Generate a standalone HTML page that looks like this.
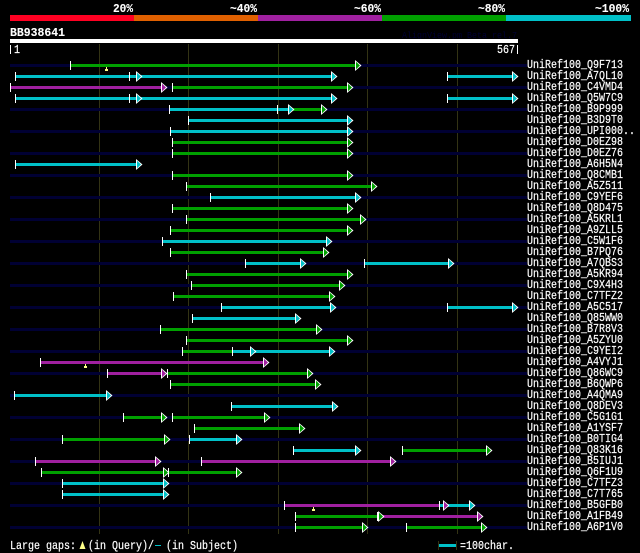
<!DOCTYPE html>
<html><head><meta charset="utf-8"><style>
html,body{margin:0;padding:0;background:#000;width:640px;height:553px;overflow:hidden}
svg{display:block}
text{font-family:"Liberation Mono",monospace;fill:#fff;font-size:12px;stroke:#fff;stroke-width:.2px}
.g{fill:#00a000}.c{fill:#00c0c8}.p{fill:#a020a0}
rect.g,rect.c,rect.p,rect.n{height:3px}
.n{fill:#000033}
.t{fill:#fff;width:1px;height:9px}
.b{font-weight:bold;stroke-width:.1px}
</style></head><body>
<svg width="640" height="553" viewBox="0 0 640 553" xmlns="http://www.w3.org/2000/svg">
<defs><g id="a"><polygon fill="#fff" points="0,-5.5 6.5,0 0,5.5"/><polygon points="1,-3.8 5,0 1,3.8"/></g></defs>
<rect x="10" y="15" width="124" height="6" fill="#ff0022"/>
<rect x="134" y="15" width="124" height="6" fill="#e06000"/>
<rect x="258" y="15" width="124" height="6" fill="#a020a0"/>
<rect x="382" y="15" width="124" height="6" fill="#00a000"/>
<rect x="506" y="15" width="125" height="6" fill="#00c0c8"/>
<text class="b" x="113" y="12" textLength="20" lengthAdjust="spacingAndGlyphs">20%</text>
<text class="b" x="230" y="12" textLength="27" lengthAdjust="spacingAndGlyphs">~40%</text>
<text class="b" x="354" y="12" textLength="27" lengthAdjust="spacingAndGlyphs">~60%</text>
<text class="b" x="478" y="12" textLength="27" lengthAdjust="spacingAndGlyphs">~80%</text>
<text class="b" x="595" y="12" textLength="34" lengthAdjust="spacingAndGlyphs">~100%</text>
<text class="b" x="10" y="36" textLength="55" lengthAdjust="spacingAndGlyphs">BB938641</text>
<text x="402" y="38" style="fill:#000033;stroke:none;font-size:9px" textLength="115" lengthAdjust="spacingAndGlyphs">AlignView.pm Beta rel.7</text>
<rect x="10" y="39" width="508" height="4" fill="#fff"/>
<rect x="10" y="45" width="1" height="9" fill="#fff"/>
<text x="14" y="53" textLength="6" lengthAdjust="spacingAndGlyphs">1</text>
<text x="497" y="53" textLength="18" lengthAdjust="spacingAndGlyphs">567</text>
<rect x="517" y="45" width="1" height="9" fill="#fff"/>
<g fill="#333314"><rect x="99" y="44" width="1" height="490"/><rect x="188" y="44" width="1" height="490"/><rect x="278" y="44" width="1" height="490"/><rect x="367" y="44" width="1" height="490"/><rect x="457" y="44" width="1" height="490"/></g>

<g transform="translate(0,64)"><rect class="n" x="10" width="517"/><rect class="g" x="70" width="286"/><rect class="t" x="70" y="-3"/><use href="#a" class="g" x="355" y="1.5"/><text x="527" y="4" textLength="96" lengthAdjust="spacingAndGlyphs">UniRef100_Q9F713</text></g>
<rect x="105" y="69" width="3" height="2" fill="#ffff88"/><rect x="106" y="67" width="1" height="2" fill="#ffff88"/>
<g transform="translate(0,75)"><rect class="c" x="15" width="317"/><rect class="t" x="15" y="-3"/><rect class="t" x="129" y="-3"/><use href="#a" class="c" x="136" y="1.5"/><use href="#a" class="c" x="331" y="1.5"/><rect class="c" x="447" width="66"/><rect class="t" x="447" y="-3"/><use href="#a" class="c" x="512" y="1.5"/><text x="527" y="4" textLength="96" lengthAdjust="spacingAndGlyphs">UniRef100_A7QL10</text></g>
<g transform="translate(0,86)"><rect class="n" x="10" width="517"/><rect class="p" x="10" width="152"/><rect class="t" x="10" y="-3"/><use href="#a" class="p" x="161" y="1.5"/><rect class="g" x="172" width="176"/><rect class="t" x="172" y="-3"/><use href="#a" class="g" x="347" y="1.5"/><text x="527" y="4" textLength="96" lengthAdjust="spacingAndGlyphs">UniRef100_C4VMD4</text></g>
<g transform="translate(0,97)"><rect class="c" x="15" width="317"/><rect class="t" x="15" y="-3"/><rect class="t" x="129" y="-3"/><use href="#a" class="c" x="136" y="1.5"/><use href="#a" class="c" x="331" y="1.5"/><rect class="c" x="447" width="66"/><rect class="t" x="447" y="-3"/><use href="#a" class="c" x="512" y="1.5"/><text x="527" y="4" textLength="96" lengthAdjust="spacingAndGlyphs">UniRef100_Q5W7C9</text></g>
<g transform="translate(0,108)"><rect class="n" x="10" width="517"/><rect class="c" x="169" width="120"/><rect class="g" x="289" width="33"/><rect class="t" x="169" y="-3"/><rect class="t" x="277" y="-3"/><use href="#a" class="c" x="288" y="1.5"/><use href="#a" class="g" x="321" y="1.5"/><text x="527" y="4" textLength="96" lengthAdjust="spacingAndGlyphs">UniRef100_B9P999</text></g>
<g transform="translate(0,119)"><rect class="c" x="188" width="160"/><rect class="t" x="188" y="-3"/><use href="#a" class="c" x="347" y="1.5"/><text x="527" y="4" textLength="96" lengthAdjust="spacingAndGlyphs">UniRef100_B3D9T0</text></g>
<g transform="translate(0,130)"><rect class="n" x="10" width="517"/><rect class="c" x="170" width="178"/><rect class="t" x="170" y="-3"/><use href="#a" class="c" x="347" y="1.5"/><text x="527" y="4" textLength="108" lengthAdjust="spacingAndGlyphs">UniRef100_UPI000..</text></g>
<g transform="translate(0,141)"><rect class="g" x="172" width="176"/><rect class="t" x="172" y="-3"/><use href="#a" class="g" x="347" y="1.5"/><text x="527" y="4" textLength="96" lengthAdjust="spacingAndGlyphs">UniRef100_D0EZ98</text></g>
<g transform="translate(0,152)"><rect class="n" x="10" width="517"/><rect class="g" x="172" width="176"/><rect class="t" x="172" y="-3"/><use href="#a" class="g" x="347" y="1.5"/><text x="527" y="4" textLength="96" lengthAdjust="spacingAndGlyphs">UniRef100_D0EZ76</text></g>
<g transform="translate(0,163)"><rect class="c" x="15" width="122"/><rect class="t" x="15" y="-3"/><use href="#a" class="c" x="136" y="1.5"/><text x="527" y="4" textLength="96" lengthAdjust="spacingAndGlyphs">UniRef100_A6H5N4</text></g>
<g transform="translate(0,174)"><rect class="n" x="10" width="517"/><rect class="g" x="172" width="176"/><rect class="t" x="172" y="-3"/><use href="#a" class="g" x="347" y="1.5"/><text x="527" y="4" textLength="96" lengthAdjust="spacingAndGlyphs">UniRef100_Q8CMB1</text></g>
<g transform="translate(0,185)"><rect class="g" x="186" width="186"/><rect class="t" x="186" y="-3"/><use href="#a" class="g" x="371" y="1.5"/><text x="527" y="4" textLength="96" lengthAdjust="spacingAndGlyphs">UniRef100_A5Z511</text></g>
<g transform="translate(0,196)"><rect class="n" x="10" width="517"/><rect class="c" x="210" width="146"/><rect class="t" x="210" y="-3"/><use href="#a" class="c" x="355" y="1.5"/><text x="527" y="4" textLength="96" lengthAdjust="spacingAndGlyphs">UniRef100_C9YEF6</text></g>
<g transform="translate(0,207)"><rect class="g" x="172" width="176"/><rect class="t" x="172" y="-3"/><use href="#a" class="g" x="347" y="1.5"/><text x="527" y="4" textLength="96" lengthAdjust="spacingAndGlyphs">UniRef100_Q8D475</text></g>
<g transform="translate(0,218)"><rect class="n" x="10" width="517"/><rect class="g" x="186" width="175"/><rect class="t" x="186" y="-3"/><use href="#a" class="g" x="360" y="1.5"/><text x="527" y="4" textLength="96" lengthAdjust="spacingAndGlyphs">UniRef100_A5KRL1</text></g>
<g transform="translate(0,229)"><rect class="g" x="170" width="178"/><rect class="t" x="170" y="-3"/><use href="#a" class="g" x="347" y="1.5"/><text x="527" y="4" textLength="96" lengthAdjust="spacingAndGlyphs">UniRef100_A9ZLL5</text></g>
<g transform="translate(0,240)"><rect class="n" x="10" width="517"/><rect class="c" x="162" width="165"/><rect class="t" x="162" y="-3"/><use href="#a" class="c" x="326" y="1.5"/><text x="527" y="4" textLength="96" lengthAdjust="spacingAndGlyphs">UniRef100_C5W1F6</text></g>
<g transform="translate(0,251)"><rect class="g" x="170" width="154"/><rect class="t" x="170" y="-3"/><use href="#a" class="g" x="323" y="1.5"/><text x="527" y="4" textLength="96" lengthAdjust="spacingAndGlyphs">UniRef100_B7PQ76</text></g>
<g transform="translate(0,262)"><rect class="n" x="10" width="517"/><rect class="c" x="245" width="56"/><rect class="t" x="245" y="-3"/><use href="#a" class="c" x="300" y="1.5"/><rect class="c" x="364" width="85"/><rect class="t" x="364" y="-3"/><use href="#a" class="c" x="448" y="1.5"/><text x="527" y="4" textLength="96" lengthAdjust="spacingAndGlyphs">UniRef100_A7QBS3</text></g>
<g transform="translate(0,273)"><rect class="g" x="186" width="162"/><rect class="t" x="186" y="-3"/><use href="#a" class="g" x="347" y="1.5"/><text x="527" y="4" textLength="96" lengthAdjust="spacingAndGlyphs">UniRef100_A5KR94</text></g>
<g transform="translate(0,284)"><rect class="n" x="10" width="517"/><rect class="g" x="191" width="149"/><rect class="t" x="191" y="-3"/><use href="#a" class="g" x="339" y="1.5"/><text x="527" y="4" textLength="96" lengthAdjust="spacingAndGlyphs">UniRef100_C9X4H3</text></g>
<g transform="translate(0,295)"><rect class="g" x="173" width="157"/><rect class="t" x="173" y="-3"/><use href="#a" class="g" x="329" y="1.5"/><text x="527" y="4" textLength="96" lengthAdjust="spacingAndGlyphs">UniRef100_C7TFZ2</text></g>
<g transform="translate(0,306)"><rect class="n" x="10" width="517"/><rect class="c" x="221" width="110"/><rect class="t" x="221" y="-3"/><use href="#a" class="c" x="330" y="1.5"/><rect class="c" x="447" width="66"/><rect class="t" x="447" y="-3"/><use href="#a" class="c" x="512" y="1.5"/><text x="527" y="4" textLength="96" lengthAdjust="spacingAndGlyphs">UniRef100_A5C517</text></g>
<g transform="translate(0,317)"><rect class="c" x="192" width="104"/><rect class="t" x="192" y="-3"/><use href="#a" class="c" x="295" y="1.5"/><text x="527" y="4" textLength="96" lengthAdjust="spacingAndGlyphs">UniRef100_Q85WW0</text></g>
<g transform="translate(0,328)"><rect class="n" x="10" width="517"/><rect class="g" x="160" width="157"/><rect class="t" x="160" y="-3"/><use href="#a" class="g" x="316" y="1.5"/><text x="527" y="4" textLength="96" lengthAdjust="spacingAndGlyphs">UniRef100_B7R8V3</text></g>
<g transform="translate(0,339)"><rect class="g" x="186" width="162"/><rect class="t" x="186" y="-3"/><use href="#a" class="g" x="347" y="1.5"/><text x="527" y="4" textLength="96" lengthAdjust="spacingAndGlyphs">UniRef100_A5ZYU0</text></g>
<g transform="translate(0,350)"><rect class="n" x="10" width="517"/><rect class="g" x="182" width="50"/><rect class="c" x="232" width="98"/><rect class="t" x="182" y="-3"/><rect class="t" x="232" y="-3"/><use href="#a" class="c" x="250" y="1.5"/><use href="#a" class="c" x="329" y="1.5"/><text x="527" y="4" textLength="96" lengthAdjust="spacingAndGlyphs">UniRef100_C9YEI2</text></g>
<g transform="translate(0,361)"><rect class="p" x="40" width="224"/><rect class="t" x="40" y="-3"/><use href="#a" class="p" x="263" y="1.5"/><text x="527" y="4" textLength="96" lengthAdjust="spacingAndGlyphs">UniRef100_A4VYJ1</text></g>
<rect x="84" y="366" width="3" height="2" fill="#ffff88"/><rect x="85" y="364" width="1" height="2" fill="#ffff88"/>
<g transform="translate(0,372)"><rect class="n" x="10" width="517"/><rect class="p" x="107" width="55"/><rect class="t" x="107" y="-3"/><use href="#a" class="p" x="161" y="1.5"/><rect class="g" x="167" width="141"/><rect class="t" x="167" y="-3"/><use href="#a" class="g" x="307" y="1.5"/><text x="527" y="4" textLength="96" lengthAdjust="spacingAndGlyphs">UniRef100_Q86WC9</text></g>
<g transform="translate(0,383)"><rect class="g" x="170" width="146"/><rect class="t" x="170" y="-3"/><use href="#a" class="g" x="315" y="1.5"/><text x="527" y="4" textLength="96" lengthAdjust="spacingAndGlyphs">UniRef100_B6QWP6</text></g>
<g transform="translate(0,394)"><rect class="n" x="10" width="517"/><rect class="c" x="14" width="93"/><rect class="t" x="14" y="-3"/><use href="#a" class="c" x="106" y="1.5"/><text x="527" y="4" textLength="96" lengthAdjust="spacingAndGlyphs">UniRef100_A4QMA9</text></g>
<g transform="translate(0,405)"><rect class="c" x="231" width="102"/><rect class="t" x="231" y="-3"/><use href="#a" class="c" x="332" y="1.5"/><text x="527" y="4" textLength="96" lengthAdjust="spacingAndGlyphs">UniRef100_Q8DEV3</text></g>
<g transform="translate(0,416)"><rect class="n" x="10" width="517"/><rect class="g" x="123" width="39"/><rect class="t" x="123" y="-3"/><use href="#a" class="g" x="161" y="1.5"/><rect class="g" x="172" width="93"/><rect class="t" x="172" y="-3"/><use href="#a" class="g" x="264" y="1.5"/><text x="527" y="4" textLength="96" lengthAdjust="spacingAndGlyphs">UniRef100_C5G1G1</text></g>
<g transform="translate(0,427)"><rect class="g" x="194" width="106"/><rect class="t" x="194" y="-3"/><use href="#a" class="g" x="299" y="1.5"/><text x="527" y="4" textLength="96" lengthAdjust="spacingAndGlyphs">UniRef100_A1YSF7</text></g>
<g transform="translate(0,438)"><rect class="n" x="10" width="517"/><rect class="g" x="62" width="103"/><rect class="t" x="62" y="-3"/><use href="#a" class="g" x="164" y="1.5"/><rect class="c" x="189" width="48"/><rect class="t" x="189" y="-3"/><use href="#a" class="c" x="236" y="1.5"/><text x="527" y="4" textLength="96" lengthAdjust="spacingAndGlyphs">UniRef100_B0TIG4</text></g>
<g transform="translate(0,449)"><rect class="c" x="293" width="63"/><rect class="t" x="293" y="-3"/><use href="#a" class="c" x="355" y="1.5"/><rect class="g" x="402" width="85"/><rect class="t" x="402" y="-3"/><use href="#a" class="g" x="486" y="1.5"/><text x="527" y="4" textLength="96" lengthAdjust="spacingAndGlyphs">UniRef100_Q83K16</text></g>
<g transform="translate(0,460)"><rect class="n" x="10" width="517"/><rect class="p" x="35" width="121"/><rect class="t" x="35" y="-3"/><use href="#a" class="p" x="155" y="1.5"/><rect class="p" x="201" width="190"/><rect class="t" x="201" y="-3"/><use href="#a" class="p" x="390" y="1.5"/><text x="527" y="4" textLength="96" lengthAdjust="spacingAndGlyphs">UniRef100_B5IUJ1</text></g>
<g transform="translate(0,471)"><rect class="g" x="41" width="123"/><rect class="t" x="41" y="-3"/><use href="#a" class="g" x="163" y="1.5"/><rect class="g" x="168" width="69"/><rect class="t" x="168" y="-3"/><use href="#a" class="g" x="236" y="1.5"/><text x="527" y="4" textLength="96" lengthAdjust="spacingAndGlyphs">UniRef100_Q6F1U9</text></g>
<g transform="translate(0,482)"><rect class="n" x="10" width="517"/><rect class="c" x="62" width="102"/><rect class="t" x="62" y="-3"/><use href="#a" class="c" x="163" y="1.5"/><text x="527" y="4" textLength="96" lengthAdjust="spacingAndGlyphs">UniRef100_C7TFZ3</text></g>
<g transform="translate(0,493)"><rect class="c" x="62" width="102"/><rect class="t" x="62" y="-3"/><use href="#a" class="c" x="163" y="1.5"/><text x="527" y="4" textLength="96" lengthAdjust="spacingAndGlyphs">UniRef100_C7T765</text></g>
<g transform="translate(0,504)"><rect class="n" x="10" width="517"/><rect class="p" x="284" width="155"/><rect class="c" x="439" width="31"/><rect class="t" x="284" y="-3"/><rect class="t" x="439" y="-3"/><use href="#a" class="p" x="443" y="1.5"/><use href="#a" class="c" x="469" y="1.5"/><text x="527" y="4" textLength="96" lengthAdjust="spacingAndGlyphs">UniRef100_B5GFB0</text></g>
<rect x="312" y="509" width="3" height="2" fill="#ffff88"/><rect x="313" y="507" width="1" height="2" fill="#ffff88"/>
<g transform="translate(0,515)"><rect class="g" x="295" width="83"/><rect class="p" x="378" width="100"/><rect class="t" x="295" y="-3"/><rect class="t" x="377" y="-3"/><use href="#a" class="g" x="378" y="1.5"/><use href="#a" class="p" x="477" y="1.5"/><text x="527" y="4" textLength="96" lengthAdjust="spacingAndGlyphs">UniRef100_A1FB49</text></g>
<g transform="translate(0,526)"><rect class="n" x="10" width="517"/><rect class="g" x="295" width="68"/><rect class="t" x="295" y="-3"/><use href="#a" class="g" x="362" y="1.5"/><rect class="g" x="406" width="76"/><rect class="t" x="406" y="-3"/><use href="#a" class="g" x="481" y="1.5"/><text x="527" y="4" textLength="96" lengthAdjust="spacingAndGlyphs">UniRef100_A6P1V0</text></g>

<text x="10" y="549" textLength="66" lengthAdjust="spacingAndGlyphs">Large gaps:</text>
<polygon points="82.5,541 85.5,549 79.5,549" fill="#ffff88"/>
<text x="88" y="549" textLength="66" lengthAdjust="spacingAndGlyphs">(in Query)/</text>
<rect x="155" y="545" width="6" height="1" fill="#00c0c8"/>
<text x="166" y="549" textLength="72" lengthAdjust="spacingAndGlyphs">(in Subject)</text>
<rect x="438" y="541" width="1" height="9" fill="#333314"/>
<rect x="456" y="541" width="1" height="9" fill="#333314"/>
<rect x="439" y="544" width="17" height="3" fill="#00c0c8"/>
<text x="460" y="549" textLength="54" lengthAdjust="spacingAndGlyphs">=100char.</text>
</svg>
</body></html>
